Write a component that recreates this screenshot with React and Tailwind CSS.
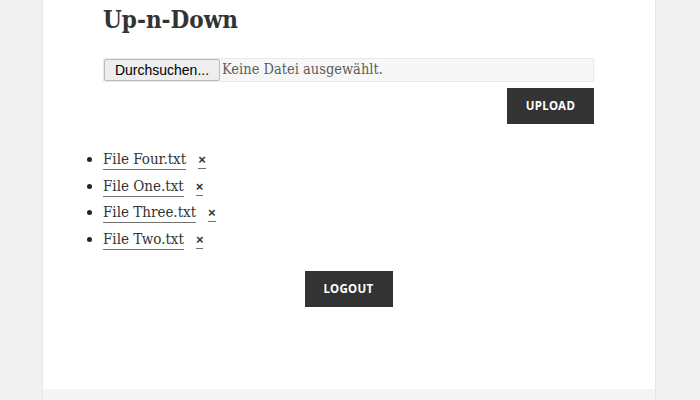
const files = ['File Four.txt', 'File One.txt', 'File Three.txt', 'File Two.txt']

export default function App() {
  return (
    <div className="min-h-[400px] bg-[#f1f1f1] font-['DejaVu_Serif_Condensed','DejaVu_Serif',serif] text-[#333333]">
      <div className="ml-[42px] w-[614px] border-x border-[#e6e6e6] bg-white">
        <div className="h-[389px] pl-[60px] pr-[61px] pt-[5px]">
          <h1 className="text-[24px] font-bold leading-[30px]">Up-n-Down</h1>

          <form className="mt-[23px] flex flex-col items-end gap-[6px]">
            <div className="flex h-[24px] w-full items-center border border-[#eaeaea] bg-[#f7f7f7]">
              <span className="flex h-[22px] w-[116px] items-center justify-center rounded-[2px] border border-[#bdbdbd] bg-[#eeeeee] font-['Liberation_Sans',sans-serif] text-[14px] text-black">
                Durchsuchen...
              </span>
              <span className="ml-[2px] text-[14.5px] text-[#5c5c5c]">Keine Datei ausgewählt.</span>
            </div>
            <button
              type="button"
              className="h-[36px] w-[87px] bg-[#333333] font-['Noto_Sans',sans-serif] text-[11.5px] font-bold tracking-[0.03em] text-white"
            >
              UPLOAD
            </button>
          </form>

          {/* file list */}
          <ul className="-ml-[18px] mt-[22px] list-disc pl-[18px] text-[15px] marker:text-[#222222]">
            {files.map((f) => (
              <li key={f} className="h-[26.67px] leading-[26px]">
                <a className="border-b border-[#707070] pb-[1px]">{f}</a>
                <a className="ml-[12px] border-b border-[#707070] pb-[1px] font-['Liberation_Sans',sans-serif] text-[13px] font-bold">
                  ×
                </a>
              </li>
            ))}
          </ul>

          <div className="mt-[18px] flex justify-center">
            <button
              type="button"
              className="h-[36px] w-[88px] bg-[#333333] font-['Noto_Sans',sans-serif] text-[11.5px] font-bold tracking-[0.03em] text-white"
            >
              LOGOUT
            </button>
          </div>
        </div>
        <div className="h-[11px] bg-[#f5f5f5]" />
      </div>
    </div>
  )
}
